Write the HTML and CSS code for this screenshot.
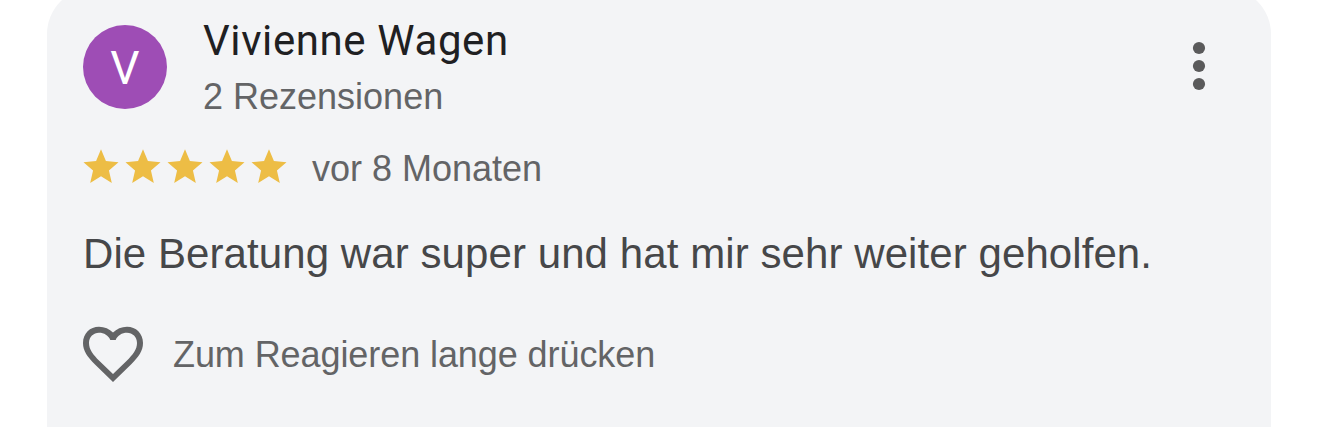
FILE: index.html
```html
<!DOCTYPE html>
<html lang="de">
<head>
<meta charset="utf-8">
<title>Rezension</title>
<link rel="stylesheet" href="styles.css">
</head>
<body>
<article class="card">
  <header class="head">
    <div class="avatar"><span class="initial">V</span></div>
    <div class="who">
      <div class="name">Vivienne Wagen</div>
      <div class="count">2 Rezensionen</div>
    </div>
    <svg class="more" width="14" height="50" viewBox="0 0 14 50"><circle cx="7" cy="7" r="6.1"/><circle cx="7" cy="25" r="6.1"/><circle cx="7" cy="43" r="6.1"/></svg>
  </header>
  <div class="rating">
    <svg class="stars" width="206" height="36" viewBox="0 0 206 36">
      <defs><path id="star" transform="translate(-3 -2.200) scale(1.75 1.77)" d="M12 17.270L18.180 21l-1.640-7.030L22 9.240l-7.190-.61L12 2 9.190 8.630 2 9.240l5.460 4.730L5.820 21z"/></defs>
      <use href="#star"/><use href="#star" x="42"/><use href="#star" x="84"/><use href="#star" x="126"/><use href="#star" x="168"/>
    </svg>
    <span class="date">vor 8 Monaten</span>
  </div>
  <p class="text">Die Beratung war super und hat mir sehr weiter geholfen.</p>
  <div class="react">
    <svg class="heart" width="60" height="56" viewBox="0 0 60 56"><path fill-rule="evenodd" d="M30 56L12 38.500C4.500 31 0 25 0 17C0 7.500 7 .8 16 .8C21.500 .8 26.500 3 30 6.600C33.500 3 38.500 .8 44 .8C53 .8 60 7.500 60 17C60 25 55.500 31 48 38.500ZM30 48L43.500 35C50 28.500 54 23.500 54 17C54 11 49.500 6.800 44 6.800C39 6.800 34.500 9.500 32.700 14H27.300C25.500 9.500 21 6.800 16 6.800C10.500 6.800 6 11 6 17C6 23.500 10 28.500 16.500 35Z"/></svg>
    <span class="hint">Zum Reagieren lange drücken</span>
  </div>
</article>
</body>
</html>
```
FILE: styles.css
```css
body {
  margin: 0;
  height: 427px;
  overflow: hidden;
  background: #fff;
  font-family: "Liberation Sans", Arial, sans-serif;
  color: #636466;
}
.card {
  box-sizing: border-box;
  width: 1224px;
  height: 439px;
  margin: -12px 0 0 47px;
  padding: 30px 36px 0;
  border-radius: 46px 46px 0 0;
  background: #f3f4f6;
  white-space: nowrap;
}
.head { display: flex; height: 98px; }
.avatar {
  display: flex;
  align-items: center;
  justify-content: center;
  width: 84px;
  height: 84px;
  margin-top: 7px;
  border-radius: 50%;
  background: #9e4db5;
  color: #fff;
}
.initial { padding-top: 1px; font: 400 46px/84px Roboto, sans-serif; }
.who { flex: 1; margin-left: 36px; }
.name { font: 400 42px/46px Roboto, sans-serif; letter-spacing: .6px; color: #1f2022; }
.count { margin-top: 12px; font-size: 36px; line-height: 42px; }
.more { margin: 23px 29px 0 0; fill: #5a5a5b; }
.rating { display: flex; height: 56px; margin-top: 32px; }
.stars { fill: #edbd45; }
.date { margin-left: 23px; font-size: 36px; line-height: 42px; }
.text { margin: 26px 0 0; font-size: 42px; line-height: 48px; letter-spacing: .08px; color: #464749; }
.react { display: flex; margin-top: 48px; }
.heart { fill: #636466; }
.hint { margin: 8px 0 0 30px; font-size: 36px; line-height: 42px; letter-spacing: -.08px; }
```
